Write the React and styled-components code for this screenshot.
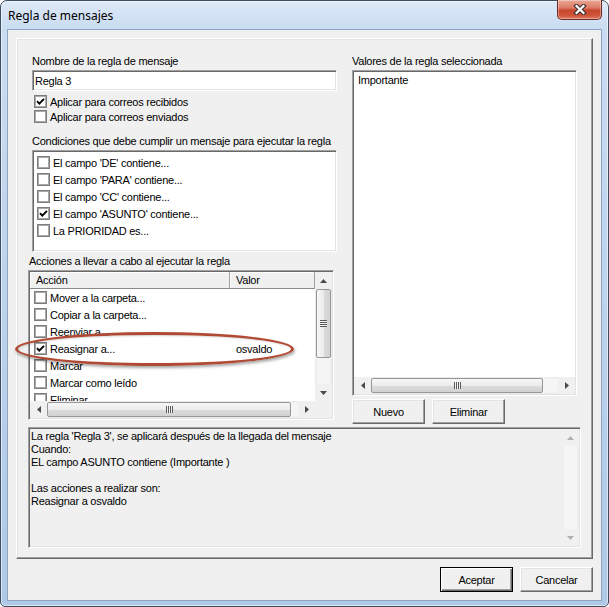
import React from 'react'
import styled, { createGlobalStyle, css } from 'styled-components'

const GlobalStyle = createGlobalStyle`
  html, body {
    margin: 0;
    padding: 0;
    background: #fff;
  }
  body {
    font-family: "Liberation Sans", Arial, sans-serif;
    font-size: 11px;
    letter-spacing: -0.25px;
    color: #000;
  }
  * {
    box-sizing: border-box;
  }
`

const raised = css`
  border: 1px solid;
  border-color: #fff #696969 #696969 #fff;
  box-shadow: inset -1px -1px #a0a0a0, inset 1px 1px #e3e3e3;
`

const sunken = css`
  border: 1px solid;
  border-color: #a0a0a0 #fff #fff #a0a0a0;
  padding: 1px;
  box-shadow: inset 1px 1px #696969, inset -1px -1px #e3e3e3;
`

const actions = [
  { label: 'Mover a la carpeta...' },
  { label: 'Copiar a la carpeta...' },
  { label: 'Reenviar a...' },
  { label: 'Reasignar a...', value: 'osvaldo', checked: true },
  { label: 'Marcar' },
  { label: 'Marcar como leído' },
  { label: 'Eliminar' },
]

const conditions = [
  { label: "El campo 'DE' contiene..." },
  { label: "El campo 'PARA' contiene..." },
  { label: "El campo 'CC' contiene..." },
  { label: "El campo 'ASUNTO' contiene...", checked: true },
  { label: 'La PRIORIDAD es...' },
]

const summary = [
  "La regla 'Regla 3', se aplicará después de la llegada del mensaje",
  'Cuando:',
  'EL campo ASUNTO contiene (Importante )',
  '',
  'Las acciones a realizar son:',
  'Reasignar a osvaldo',
]

const CheckBox = ({ checked }) => (
  <Box>
    {checked && (
      <svg width="9" height="9" viewBox="0 0 9 9">
        <path d="M1 4.2 L3.3 6.6 L8 1.8" fill="none" stroke="#000" strokeWidth="1.9" />
      </svg>
    )}
  </Box>
)

const Arrow = ({ dir, muted }) => {
  const horiz = dir === 'left' || dir === 'right'
  const points = {
    up: '0,4 3.5,0 7,4',
    down: '0,0 3.5,4 7,0',
    left: '4,0 0,3.5 4,7',
    right: '0,0 4,3.5 0,7',
  }[dir]
  return (
    <svg width={horiz ? 4 : 7} height={horiz ? 7 : 4} viewBox={horiz ? '0 0 4 7' : '0 0 7 4'}>
      <polygon points={points} fill={muted ? '#b0b0b0' : '#4a4a4a'} />
    </svg>
  )
}

const ScrollBar = ({ dir, thumbSize, muted }) => (
  <Bar $dir={dir}>
    <ArrowButton>
      <Arrow dir={dir === 'v' ? 'up' : 'left'} muted={muted} />
    </ArrowButton>
    <Track $dir={dir}>
      {thumbSize ? (
        <Thumb $dir={dir} $size={thumbSize}>
          <Grip $dir={dir} />
        </Thumb>
      ) : null}
    </Track>
    <ArrowButton>
      <Arrow dir={dir === 'v' ? 'down' : 'right'} muted={muted} />
    </ArrowButton>
  </Bar>
)

export default function App() {
  return (
    <>
      <GlobalStyle />
      <Window>
        <TitleBar>
          <Title>Regla de mensajes</Title>
          <CloseButton aria-label="Cerrar">
            <svg width="14" height="11" viewBox="0 0 14 11">
              <path d="M3.5 2 L10.5 9 M10.5 2 L3.5 9" stroke="#3d3030" strokeWidth="4.4" strokeLinecap="square" />
              <path d="M3.5 2 L10.5 9 M10.5 2 L3.5 9" stroke="#fff" strokeWidth="2.2" strokeLinecap="square" />
            </svg>
          </CloseButton>
        </TitleBar>
        <Client>
          <Panel>
            <TopGrid>
              <Column>
                <Label $indent={4}>Nombre de la regla de mensaje</Label>
                <NameInput readOnly defaultValue="Regla 3" />
                <Options>
                  <CheckRow>
                    <CheckBox checked />
                    Aplicar para correos recibidos
                  </CheckRow>
                  <CheckRow>
                    <CheckBox />
                    Aplicar para correos enviados
                  </CheckRow>
                </Options>
                <Label $indent={4} $gap={11}>Condiciones que debe cumplir un mensaje para ejecutar la regla</Label>
                <ConditionList>
                  {conditions.map(c => (
                    <ConditionRow key={c.label}>
                      <CheckBox checked={c.checked} />
                      {c.label}
                    </ConditionRow>
                  ))}
                </ConditionList>
                <Label $indent={1} $gap={3}>Acciones a llevar a cabo al ejecutar la regla</Label>
                <ActionsWrap>
                  <ActionsList>
                    <ListPane>
                      <Header>
                        <HeaderCell>Acción</HeaderCell>
                        <HeaderCell>Valor</HeaderCell>
                      </Header>
                      <Rows>
                        {actions.map(a => (
                          <ActionRow key={a.label}>
                            <ActionName>
                              <CheckBox checked={a.checked} />
                              {a.label}
                            </ActionName>
                            <ActionValue>{a.value}</ActionValue>
                          </ActionRow>
                        ))}
                      </Rows>
                    </ListPane>
                    <ScrollBar dir="v" thumbSize={69} />
                    <ScrollBar dir="h" thumbSize={244} />
                    <Corner />
                  </ActionsList>
                  <Highlight />
                </ActionsWrap>
              </Column>
              <Column>
                <Label>Valores de la regla seleccionada</Label>
                <ValuesList>
                  <ValuesBody>Importante</ValuesBody>
                  <ScrollBar dir="h" thumbSize={172} />
                </ValuesList>
                <ButtonRow>
                  <Button>Nuevo</Button>
                  <Button>Eliminar</Button>
                </ButtonRow>
              </Column>
            </TopGrid>
            <Summary>
              <SummaryText>
                {summary.map((line, i) => (
                  <Line key={i}>{line}</Line>
                ))}
              </SummaryText>
              <ScrollBar dir="v" muted />
            </Summary>
          </Panel>
          <Footer>
            <Button $default>Aceptar</Button>
            <Button>Cancelar</Button>
          </Footer>
        </Client>
      </Window>
    </>
  )
}

const Window = styled.div`
  width: 609px;
  height: 607px;
  border: 1px solid #3f4f63;
  border-radius: 7px 7px 5px 5px;
  background: linear-gradient(180deg, #dde9f8 0px, #cadcf1 28px, #bcd3ec 300px, #aec8e6 100%);
  box-shadow: inset 0 0 0 1px rgba(255, 255, 255, 0.55);
  padding: 0 6px 5px 6px;
  display: flex;
  flex-direction: column;
`

const TitleBar = styled.div`
  height: 28px;
  display: flex;
  justify-content: space-between;
  align-items: center;
`

const Title = styled.div`
  font-family: "Noto Sans", "Open Sans", sans-serif;
  font-size: 12px;
  letter-spacing: 0;
  padding-left: 1px;
  margin-top: 1px;
`

const CloseButton = styled.div`
  align-self: flex-start;
  width: 45px;
  height: 20px;
  margin-top: -1px;
  border: 1px solid #6b2b22;
  border-top: none;
  border-radius: 0 0 5px 5px;
  background: linear-gradient(180deg, #eaa896 0%, #dc7c66 40%, #c8472d 55%, #cf5238 80%, #de7a62 100%);
  box-shadow: inset 0 0 0 1px rgba(255, 255, 255, 0.35);
  display: flex;
  align-items: center;
  justify-content: center;
`

const Client = styled.div`
  flex: 1;
  border: 1px solid #8ea4c1;
  background: #f0f0f0;
  padding: 8px;
  display: flex;
  flex-direction: column;
`

const Panel = styled.div`
  ${raised};
  height: 521px;
  padding: 16px 11px 0 11px;
`

const TopGrid = styled.div`
  display: grid;
  grid-template-columns: 324px 229px;
`

const Column = styled.div`
  display: flex;
  flex-direction: column;
  align-items: flex-start;
`

const Label = styled.div`
  height: 13px;
  line-height: 13px;
  white-space: nowrap;
  margin-left: ${p => p.$indent || 0}px;
  margin-top: ${p => p.$gap || 0}px;
`

const NameInput = styled.input`
  ${sunken};
  margin: 2px 0 0 4px;
  width: 305px;
  height: 21px;
  padding: 1px 1px 1px 2px;
  background: #fff;
  font: inherit;
  letter-spacing: inherit;
  color: #000;
  outline: none;
`

const Options = styled.div`
  margin: 3px 0 0 6px;
`

const CheckRow = styled.div`
  height: 15px;
  display: flex;
  align-items: center;
  gap: 3px;
  white-space: nowrap;
`

const Box = styled.span`
  flex: none;
  width: 13px;
  height: 13px;
  border: 1px solid #7c7c7c;
  box-shadow: inset 0 0 0 1px #a9a9a9;
  background: #fff;
  display: flex;
  align-items: center;
  justify-content: center;
`

const ConditionList = styled.div`
  ${sunken};
  margin: 2px 0 0 4px;
  width: 305px;
  height: 102px;
  padding: 3px 0 0 4px;
  background: #fff;
`

const ConditionRow = styled(CheckRow)`
  height: 17px;
`

const ActionsWrap = styled.div`
  position: relative;
  margin-top: 2px;
`

const ActionsList = styled.div`
  ${sunken};
  width: 306px;
  height: 150px;
  background: #fff;
  display: grid;
  grid-template-columns: 285px 17px;
  grid-template-rows: 129px 17px;
`

const ListPane = styled.div`
  display: flex;
  flex-direction: column;
  overflow: hidden;
`

const Header = styled.div`
  display: grid;
  grid-template-columns: 200px 85px;
  height: 17px;
  flex: none;
`

const HeaderCell = styled.div`
  background: #f0f0f0;
  border-right: 1px solid #a0a0a0;
  border-bottom: 1px solid #8a8a8a;
  box-shadow: inset 1px 1px #fff;
  padding-left: 6px;
  line-height: 16px;
`

const Rows = styled.div`
  height: 112px;
  overflow: hidden;
`

const ActionRow = styled.div`
  display: grid;
  grid-template-columns: 200px 85px;
  height: 17px;
  align-items: center;
  white-space: nowrap;
`

const ActionName = styled.div`
  display: flex;
  align-items: center;
  gap: 3px;
  padding-left: 4px;
`

const ActionValue = styled.div`
  padding-left: 6px;
`

const Corner = styled.div`
  background: #f0f0f0;
`

const Highlight = styled.div`
  position: absolute;
  left: -13px;
  top: 62px;
  width: 279px;
  height: 34px;
  border: 3px solid #b14a35;
  border-radius: 50%;
  box-shadow: 1px 2px 3px rgba(0, 0, 0, 0.35), inset 1px 1px 2px rgba(0, 0, 0, 0.15);
  pointer-events: none;
`

const Bar = styled.div`
  display: flex;
  flex-direction: ${p => (p.$dir === 'v' ? 'column' : 'row')};
  ${p => (p.$dir === 'v' ? 'width: 17px; height: 100%;' : 'height: 17px; width: 100%;')}
  background: #f0f0f0;
  flex: none;
`

const ArrowButton = styled.div`
  width: 17px;
  height: 17px;
  flex: none;
  display: flex;
  align-items: center;
  justify-content: center;
`

const Track = styled.div`
  flex: 1;
  display: flex;
  flex-direction: ${p => (p.$dir === 'v' ? 'column' : 'row')};
  background: ${p =>
    p.$dir === 'v'
      ? 'linear-gradient(90deg, #e6e6e6 0, #f5f5f5 2px, #f5f5f5 15px, #e6e6e6 17px)'
      : 'linear-gradient(180deg, #e6e6e6 0, #f5f5f5 2px, #f5f5f5 15px, #e6e6e6 17px)'};
`

const Thumb = styled.div`
  flex: none;
  border: 1px solid #979797;
  border-radius: 2px;
  display: flex;
  align-items: center;
  justify-content: center;
  ${p =>
    p.$dir === 'v'
      ? css`
          height: ${p.$size}px;
          margin: 0 1px;
          background: linear-gradient(90deg, #f6f6f6 0%, #ececec 50%, #dcdcdc 51%, #d2d2d2 100%);
        `
      : css`
          width: ${p.$size}px;
          margin: 1px 0;
          background: linear-gradient(180deg, #f6f6f6 0%, #ececec 50%, #dcdcdc 51%, #d2d2d2 100%);
        `}
`

const Grip = styled.span`
  width: 7px;
  height: 7px;
  background: ${p =>
    p.$dir === 'v'
      ? 'repeating-linear-gradient(180deg, #5b5b5b 0 1px, #f2f2f2 1px 2px)'
      : 'repeating-linear-gradient(90deg, #5b5b5b 0 1px, #f2f2f2 1px 2px)'};
`

const ValuesList = styled.div`
  ${sunken};
  margin-top: 2px;
  width: 225px;
  height: 326px;
  background: #fff;
  display: flex;
  flex-direction: column;
`

const ValuesBody = styled.div`
  flex: 1;
  padding: 1px 0 0 4px;
  line-height: 15px;
`

const ButtonRow = styled.div`
  margin-top: 3px;
  display: flex;
  gap: 7px;
`

const Button = styled.button`
  ${raised};
  width: 73px;
  height: 25px;
  padding: 0;
  background: #f0f0f0;
  font: inherit;
  letter-spacing: inherit;
  color: #000;
  ${p =>
    p.$default &&
    css`
      border-color: #000;
      box-shadow: inset 1px 1px #fff, inset -1px -1px #696969, inset -2px -2px #a0a0a0;
    `}
`

const Summary = styled.div`
  ${sunken};
  margin-top: 3px;
  height: 121px;
  background: #f0f0f0;
  display: flex;
`

const SummaryText = styled.div`
  flex: 1;
  padding: 1px 0 0 1px;
`

const Line = styled.div`
  height: 13px;
  line-height: 13px;
  white-space: nowrap;
`

const Footer = styled.div`
  margin-top: 8px;
  display: flex;
  justify-content: flex-end;
  gap: 7px;
`
